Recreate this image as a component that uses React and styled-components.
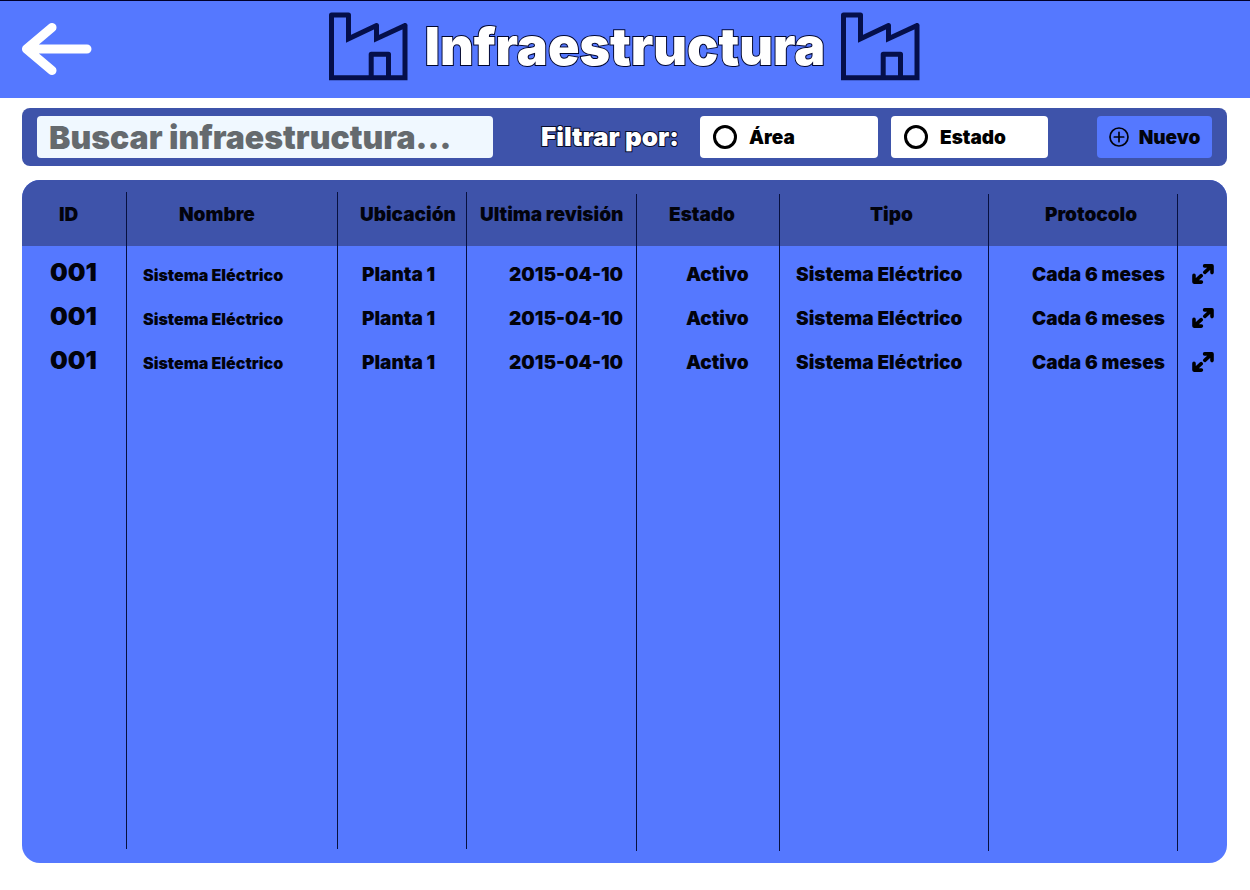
import React from "react";
import styled, { createGlobalStyle } from "styled-components";

const blue = "#5578ff";
const navy = "#3e53aa";
const ink = "#02030c";

const GlobalStyle = createGlobalStyle`
  *, *::before, *::after { box-sizing: border-box; }
  body { margin: 0; background: #fff; }
  body, button, input { font-family: Inter, "Liberation Sans", sans-serif; font-weight: 900; }
`;

const Page = styled.div`
  min-height: 100vh;
  display: flex;
  flex-direction: column;
`;

const Header = styled.header`
  height: 98px;
  padding: 0 22px;
  border-top: 1px solid #00002a;
  background: ${blue};
  display: grid;
  grid-template-columns: 1fr auto 1fr;
  align-items: center;
`;

const BackButton = styled.button`
  justify-self: start;
  padding: 0;
  border: 0;
  background: none;
  line-height: 0;
  cursor: pointer;
`;

const Brand = styled.div`
  display: flex;
  align-items: center;
  gap: 16px;
  padding-bottom: 6px;
`;

const Title = styled.h1`
  margin: 0;
  font-size: 52px;
  line-height: 68px;
  font-weight: 900;
  color: #fff;
  -webkit-text-stroke: 2px #00062e;
  paint-order: stroke fill;
`;

const Main = styled.main`
  flex: 1;
  display: flex;
  flex-direction: column;
  gap: 14px;
  padding: 10px 23px 27px 22px;
`;

const Toolbar = styled.form`
  display: flex;
  align-items: center;
  height: 58px;
  padding: 0 15px;
  border-radius: 8px;
  background: ${navy};
`;

const Search = styled.input`
  flex: 1;
  min-width: 0;
  height: 42px;
  padding: 0 12px;
  border: 0;
  border-radius: 4px;
  background: #f0f8ff;
  font-size: 32px;
  color: #656a6e;
  &::placeholder { color: #656a6e; opacity: 1; }
`;

const Filters = styled.fieldset`
  display: flex;
  align-items: center;
  gap: 13px;
  margin: 0 49px 0 48px;
  padding: 0;
  border: 0;
`;

const FilterTitle = styled.span`
  margin-right: 8px;
  font-size: 26px;
  line-height: 34px;
  color: #fff;
  -webkit-text-stroke: 2px #070c2c;
  paint-order: stroke fill;
`;

const FilterOption = styled.label`
  display: flex;
  align-items: center;
  gap: 12px;
  width: ${(p) => p.$width}px;
  height: 42px;
  padding: 0 13px;
  border-radius: 4px;
  background: #fff;
  font-size: 19px;
  color: #000;
  cursor: pointer;
`;

const Radio = styled.input`
  appearance: none;
  width: 24px;
  height: 24px;
  margin: 0;
  border: 3px solid #000;
  border-radius: 50%;
  &:checked { background: radial-gradient(#000 0 5px, transparent 6px); }
`;

const NewButton = styled.button`
  display: flex;
  align-items: center;
  justify-content: center;
  gap: 10px;
  width: 115px;
  height: 42px;
  padding: 0;
  border: 0;
  border-radius: 4px;
  background: ${blue};
  font-size: 19px;
  color: ${ink};
  cursor: pointer;
`;

const Panel = styled.section`
  flex: 1;
  display: grid;
  overflow: hidden;
  border-radius: 18px;
  background: ${blue};
`;

const Table = styled.table`
  width: 100%;
  height: 100%;
  table-layout: fixed;
  border-collapse: collapse;
  color: ${ink};
  font-size: 19px;
  line-height: 24px;
  text-align: left;
  white-space: nowrap;
`;

const Col = styled.col`
  width: ${(p) => p.$width}px;
`;

const rule = "linear-gradient(#07103f, #07103f) no-repeat";

const HeadCell = styled.th`
  height: 66px;
  padding: 4px 0 0 ${(p) => p.$indent}px;
  font-weight: 900;
  background: ${(p) => (p.$last ? navy : `${rule} right ${p.$top}px / 1px 100%, ${navy}`)};
`;

const Cell = styled.td`
  height: 44px;
  padding: 14px 0 0 ${(p) => p.$indent}px;
  vertical-align: baseline;
  font-size: ${(p) => p.$size || 19}px;
  background: ${(p) => (p.$last ? "none" : `${rule} right top / 1px 100%`)};
`;

const RestCell = styled.td`
  padding: 0;
  background: ${(p) => (p.$last ? "none" : `${rule} right bottom ${p.$bottom}px / 1px 100%`)};
`;

const ExpandButton = styled.button`
  padding: 0;
  border: 0;
  background: none;
  color: #000;
  line-height: 0;
  vertical-align: -3px;
  cursor: pointer;
`;

function Factory() {
  return (
    <svg width="80" height="69" viewBox="0 0 80 69" fill="none" stroke="#050f4a" strokeWidth="5" aria-hidden="true">
      <path
        strokeLinecap="round"
        d="M19.5 3V26.7L47.5 13.6M47.5 13.6V26.7L76 13.6M76 13.6V65.8H2.5V3M2.5 3H19.5"
      />
      <path strokeLinejoin="round" d="M42.2 66V42.2H59.5V66" />
    </svg>
  );
}

function BackArrow() {
  return (
    <svg width="70" height="54" viewBox="0 0 70 54" fill="none" stroke="#fff" strokeWidth="9" strokeLinecap="round" strokeLinejoin="round" aria-hidden="true">
      <path d="M65 26H4.5M30 4.5L4.5 26L30 47.5" />
    </svg>
  );
}

function PlusCircle() {
  return (
    <svg width="20" height="20" viewBox="0 0 20 20" fill="none" stroke="currentColor" strokeWidth="1.7" strokeLinecap="round" aria-hidden="true">
      <circle cx="10" cy="10" r="9" />
      <path d="M10 5.3V14.7M5.3 10H14.7" />
    </svg>
  );
}

function Expand() {
  return (
    <svg width="22" height="20" viewBox="0 0 22 20" fill="none" stroke="currentColor" strokeWidth="3.6" strokeLinecap="round" strokeLinejoin="round" aria-hidden="true">
      <path d="M12.6 1.9H20V8.6M19.6 2.2L12.8 8.4M2 11.4V18.1H9.4M2.4 17.8L9.2 11.6" />
    </svg>
  );
}

const columns = [
  { key: "id", label: "ID", width: 105, head: 37, indent: 28, size: 25, inset: 12 },
  { key: "nombre", label: "Nombre", width: 211, head: 52, indent: 16, size: 16, inset: 12 },
  { key: "ubicacion", label: "Ubicación", width: 129, head: 22, indent: 24, inset: 12 },
  { key: "revision", label: "Ultima revisión", width: 170, head: 13, indent: 42, inset: 14 },
  { key: "estado", label: "Estado", width: 143, head: 32, indent: 49, inset: 14 },
  { key: "tipo", label: "Tipo", width: 209, head: 90, indent: 16, inset: 14 },
  { key: "protocolo", label: "Protocolo", width: 189, head: 56, indent: 43, inset: 14 },
  { key: "ver", label: "", width: 49, head: 0, indent: 14, last: true },
];

const record = {
  id: "001",
  nombre: "Sistema Eléctrico",
  ubicacion: "Planta 1",
  revision: "2015-04-10",
  estado: "Activo",
  tipo: "Sistema Eléctrico",
  protocolo: "Cada 6 meses",
};
const records = [record, record, record];

export default function App() {
  return (
    <Page>
      <GlobalStyle />
      <Header>
        <BackButton type="button" aria-label="Volver">
          <BackArrow />
        </BackButton>
        <Brand>
          <Factory />
          <Title>Infraestructura</Title>
          <Factory />
        </Brand>
      </Header>
      <Main>
        <Toolbar onSubmit={(e) => e.preventDefault()}>
          <Search type="text" aria-label="Buscar infraestructura" placeholder="Buscar infraestructura..." />
          <Filters aria-labelledby="filter-title">
            <FilterTitle id="filter-title">Filtrar por:</FilterTitle>
            <FilterOption $width={178}>
              <Radio type="radio" name="filtro" value="area" />
              Área
            </FilterOption>
            <FilterOption $width={157}>
              <Radio type="radio" name="filtro" value="estado" />
              Estado
            </FilterOption>
          </Filters>
          <NewButton type="button">
            <PlusCircle />
            Nuevo
          </NewButton>
        </Toolbar>
        <Panel>
          <Table>
            <colgroup>
              {columns.map((c) => (
                <Col key={c.key} $width={c.width} />
              ))}
            </colgroup>
            <thead>
              <tr>
                {columns.map((c) => (
                  <HeadCell key={c.key} scope="col" $indent={c.head} $top={c.inset} $last={c.last}>
                    {c.label}
                  </HeadCell>
                ))}
              </tr>
            </thead>
            <tbody>
              {records.map((r, i) => (
                <tr key={i}>
                  {columns.map((c) => (
                    <Cell key={c.key} $indent={c.indent} $size={c.size} $last={c.last}>
                      {c.last ? (
                        <ExpandButton type="button" aria-label="Ver detalle">
                          <Expand />
                        </ExpandButton>
                      ) : (
                        r[c.key]
                      )}
                    </Cell>
                  ))}
                </tr>
              ))}
              <tr aria-hidden="true">
                {columns.map((c) => (
                  <RestCell key={c.key} $bottom={26 - c.inset} $last={c.last} />
                ))}
              </tr>
            </tbody>
          </Table>
        </Panel>
      </Main>
    </Page>
  );
}
